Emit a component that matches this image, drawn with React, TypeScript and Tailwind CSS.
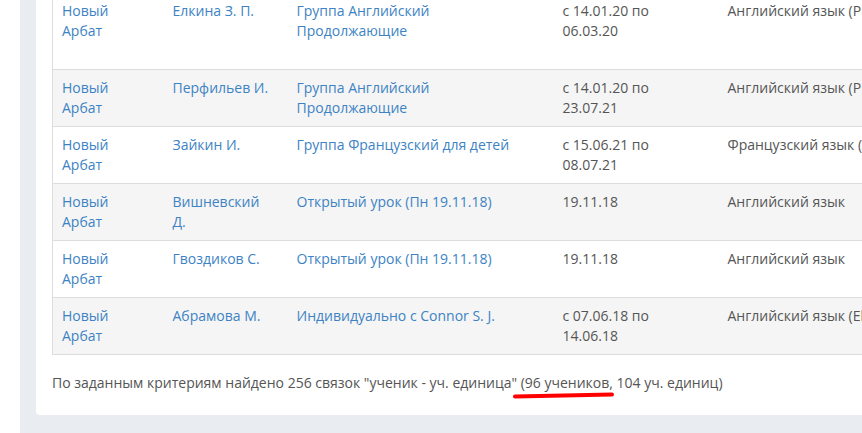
import React from "react";

type Row = { branch: string; teacher: string; group: string; period: string; subject: string; extra: string };

const rows: Row[] = [
  { branch: "Новый Арбат", teacher: "Елкина З. П.", group: "Группа Английский Продолжающие", period: "с 14.01.20 по 06.03.20", subject: "Английский язык (Pre-Intermediate)", extra: "Обучение завершено досрочно" },
  { branch: "Новый Арбат", teacher: "Перфильев И.", group: "Группа Английский Продолжающие", period: "с 14.01.20 по 23.07.21", subject: "Английский язык (Pre-Intermediate)", extra: "Активно" },
  { branch: "Новый Арбат", teacher: "Зайкин И.", group: "Группа Французский для детей", period: "с 15.06.21 по 08.07.21", subject: "Французский язык (A1)", extra: "Активно" },
  { branch: "Новый Арбат", teacher: "Вишневский Д.", group: "Открытый урок (Пн 19.11.18)", period: "19.11.18", subject: "Английский язык", extra: "—" },
  { branch: "Новый Арбат", teacher: "Гвоздиков С.", group: "Открытый урок (Пн 19.11.18)", period: "19.11.18", subject: "Английский язык", extra: "—" },
  { branch: "Новый Арбат", teacher: "Абрамова М.", group: "Индивидуально с Connor S. J.", period: "с 07.06.18 по 14.06.18", subject: "Английский язык (Elementary)", extra: "Завершено" },
];

export default function App() {
  return (
    <div
      className="w-[862px] h-[433px] overflow-hidden bg-white flex text-[14px] leading-[20px]"
      style={{ fontFamily: '"Open Sans", "Noto Sans", sans-serif' }}
    >
      <div className="w-[20px] shrink-0 bg-white" />
      <div className="flex-1 bg-[#e9ecf1] pl-[16px] overflow-hidden">
        <div className="bg-white rounded-bl-[4px] w-[1200px] pl-[16px] pb-[22px]">
          <table className="table-fixed border-collapse w-[1100px] -mt-[8px]">
            <colgroup>
              <col className="w-[111px]" />
              <col className="w-[124px]" />
              <col className="w-[266px]" />
              <col className="w-[165px]" />
              <col className="w-[310px]" />
              <col className="w-[124px]" />
            </colgroup>
            <tbody>
              {rows.map((r, i) => (
                <tr
                  key={i}
                  className={`border border-[#dddddd] ${i % 2 === 1 ? "bg-[#f5f5f5]" : "bg-white"}`}
                >
                  <td className="align-top py-[8px] pl-[9px] pr-[26px] text-[#3d83c4]">{r.branch}</td>
                  <td className="align-top py-[8px] pl-[9px] pr-[14px] text-[#3d83c4]">{r.teacher}</td>
                  <td className="align-top py-[8px] pl-[9px] pr-[30px] text-[#3d83c4]">{r.group}</td>
                  <td className="align-top py-[8px] pl-[9px] pr-[36px] text-[#555555]">{r.period}</td>
                  <td className="align-top py-[8px] pl-[9px] pr-[8px] text-[#555555]">{r.subject}</td>
                  <td className="align-top py-[8px] pl-[9px] pr-[8px] text-[#555555]">{r.extra}</td>
                </tr>
              ))}
            </tbody>
          </table>
          <div className="relative mt-[18px] text-[#555555] whitespace-nowrap">
            По заданным критериям найдено 256 связок "ученик - уч. единица" (96 учеников, 104 уч. единиц)
            <svg
              className="absolute left-[460px] top-[18px]"
              width="104"
              height="10"
              viewBox="0 0 104 10"
            >
              <path d="M3 5.5 Q 50 4.5 100 3.5" stroke="#ff0000" strokeWidth="4" strokeLinecap="round" fill="none" />
            </svg>
          </div>
        </div>
      </div>
    </div>
  );
}
